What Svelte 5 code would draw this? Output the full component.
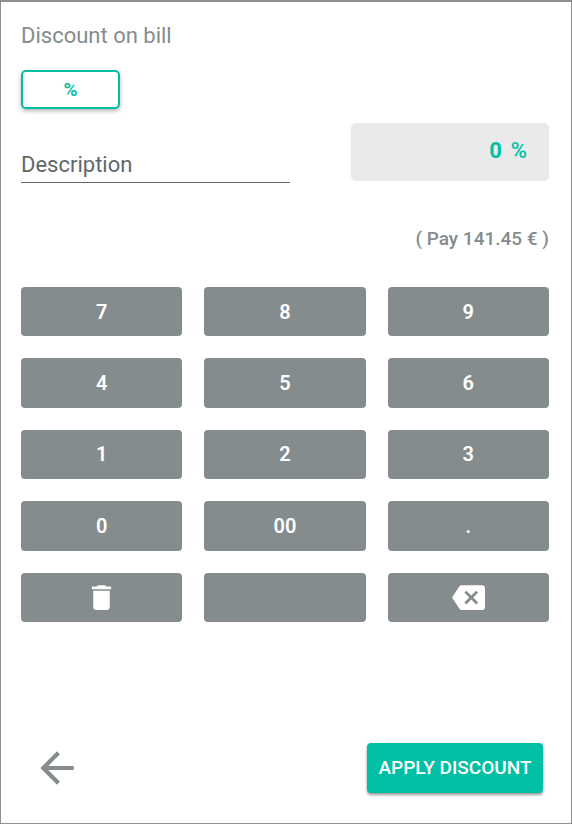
<script>
  const keys = ['7', '8', '9', '4', '5', '6', '1', '2', '3', '0', '00', '.', 'clear', '', 'back'];
  const total = 141.45;
  let entry = $state('0');
  let description = $state('');
  let due = $derived(total * (1 - Math.min(Number(entry) || 0, 100) / 100));

  function press(key) {
    if (key === 'clear') entry = '0';
    else if (key === 'back') entry = entry.slice(0, -1) || '0';
    else if (key === '.') entry = entry.includes('.') ? entry : entry + '.';
    else if (entry === '0') entry = key === '00' ? '0' : key || '0';
    else entry += key;
  }
</script>

<main>
  <h1>Discount on bill</h1>
  <button class="mode" type="button">%</button>

  <div class="entry">
    <input type="text" placeholder="Description" aria-label="Description" bind:value={description} />
    <output class="amount"><strong>{entry}</strong><span>%</span></output>
  </div>
  <p class="pay">( Pay {due.toFixed(2)} € )</p>

  <div class="keypad">
    {#each keys as key}
      <button type="button" aria-label={key || 'Blank'} onclick={() => press(key)}>
        {#if key === 'clear'}
          <svg width="33" height="33" viewBox="0 0 24 24" aria-hidden="true">
            <path d="M6 19c0 1.1.9 2 2 2h8c1.100 0 2-.9 2-2V7H6v12z" />
            <path d="M19 4h-3.500l-1-1h-5l-1 1H5v2h14V4z" />
          </svg>
        {:else if key === 'back'}
          <svg width="33" height="33" viewBox="0 0 24 24" aria-hidden="true">
            <path d="M22 3H7c-.69 0-1.230.35-1.590.88L0 12l5.410 8.110c.36.53.9.89 1.590.89h15c1.100 0 2-.9 2-2V5c0-1.100-.9-2-2-2zm-3 12.590L17.590 17 14 13.410 10.410 17 9 15.590 12.590 12 9 8.410 10.410 7 14 10.590 17.590 7 19 8.410 15.410 12 19 15.590z" />
          </svg>
        {:else}
          {key}
        {/if}
      </button>
    {/each}
  </div>

  <footer>
    <button class="return" type="button" aria-label="Go back">
      <svg width="50" height="50" viewBox="0 0 24 24" aria-hidden="true">
        <path d="M20 11H7.830l5.590-5.590L12 4l-8 8 8 8 1.410-1.410L7.830 13H20v-2z" />
      </svg>
    </button>
    <button class="apply" type="button">APPLY DISCOUNT</button>
  </footer>
</main>

<style>
  :global(body) {
    margin: 0;
    background: #fff;
  }
  main {
    box-sizing: border-box;
    min-height: 100vh;
    display: flex;
    flex-direction: column;
    padding: 20px 22px 30px 20px;
    border: 1px solid #8f8f8f;
    border-top-width: 2px;
    font-family: Roboto, sans-serif;
    color: #848c8d;
  }
  button {
    margin: 0;
    padding: 0;
    border: 0;
    border-radius: 4px;
    font-family: inherit;
    cursor: pointer;
  }
  svg {
    display: block;
    fill: currentColor;
  }
  h1 {
    margin: 0 0 20px;
    font-size: 22px;
    line-height: 28px;
    font-weight: 400;
  }
  .mode {
    box-sizing: border-box;
    width: 99px;
    height: 39px;
    border: 2px solid #00bfa5;
    border-radius: 5px;
    background: #fff;
    color: #00bfa5;
    font-size: 19px;
    font-weight: 600;
    box-shadow: 0 2px 4px rgba(0, 0, 0, 0.3);
  }
  .entry {
    display: grid;
    grid-template-columns: 269fr 198fr;
    column-gap: 61px;
    margin-top: 14px;
  }
  .entry input {
    box-sizing: border-box;
    width: 100%;
    min-width: 0;
    height: 36px;
    margin: 24px 0 0;
    padding: 0;
    border: 0;
    border-bottom: 1px solid #5f6b6b;
    border-radius: 0;
    background: none;
    color: #5f686a;
    font-family: inherit;
    font-size: 22px;
    outline: none;
  }
  .entry input::placeholder {
    color: #5f686a;
    opacity: 1;
  }
  .amount {
    box-sizing: border-box;
    height: 58px;
    display: flex;
    justify-content: flex-end;
    gap: 9px;
    padding: 0 22px;
    border-radius: 5px;
    background: #eaeaea;
    color: #00bfa5;
    font-size: 22px;
    line-height: 56px;
    font-weight: 500;
  }
  .amount strong {
    font-weight: 700;
  }
  .pay {
    margin: 44px 0 36px;
    text-align: right;
    font-size: 19px;
    line-height: 24px;
    font-weight: 500;
  }
  .keypad {
    height: 335px;
    display: grid;
    grid-template-columns: repeat(3, 1fr);
    grid-auto-rows: 1fr;
    gap: 22px;
  }
  .keypad button {
    display: flex;
    align-items: center;
    justify-content: center;
    background: #848c8d;
    color: #fff;
    font-size: 20px;
    font-weight: 600;
  }
  footer {
    display: flex;
    align-items: center;
    justify-content: space-between;
    margin-top: auto;
    padding: 0 6px 0 11px;
  }
  .return {
    background: none;
    color: #848c8d;
  }
  .apply {
    width: 176px;
    height: 50px;
    padding-bottom: 2px;
    background: #00bfa5;
    color: #fff;
    font-size: 19px;
    font-weight: 500;
    box-shadow: 0 2px 3px rgba(0, 0, 0, 0.4);
  }
</style>
